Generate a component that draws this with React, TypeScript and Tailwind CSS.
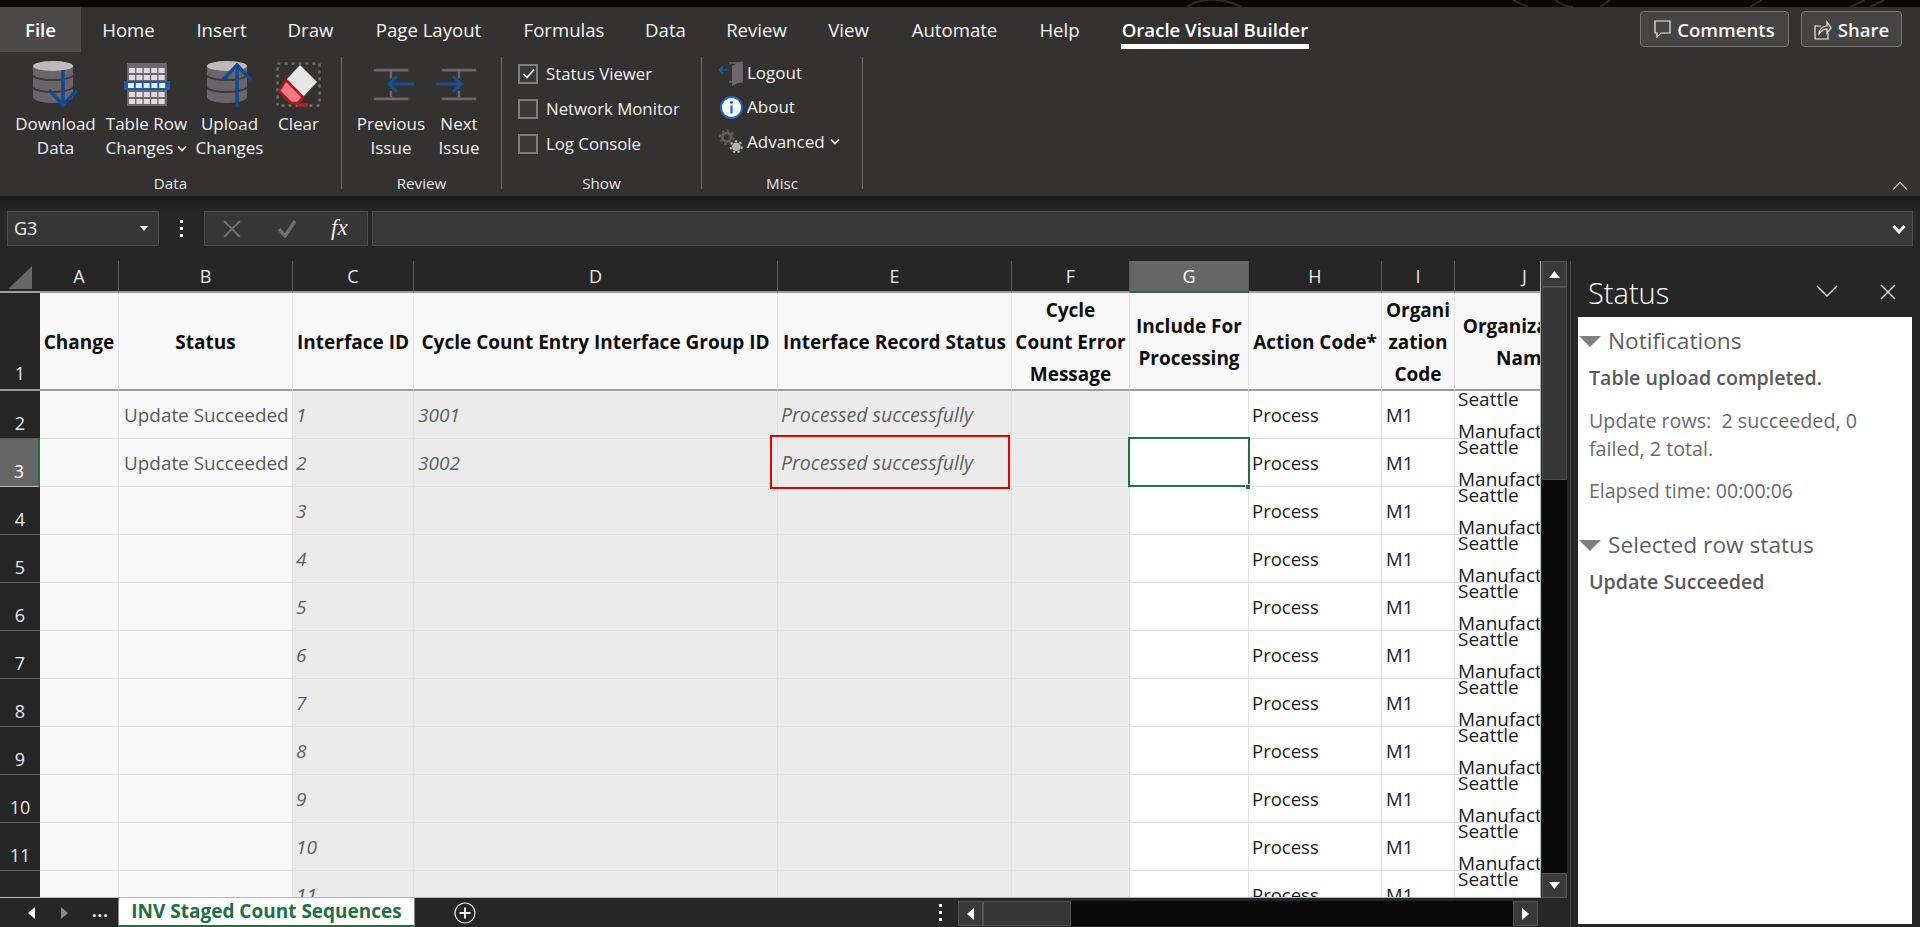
import React from "react";

const tabs: [string, string][] = [
  ["Home", "w-[95px]"],
  ["Insert", "w-[91px]"],
  ["Draw", "w-[87px]"],
  ["Page Layout", "w-[149px]"],
  ["Formulas", "w-[122px]"],
  ["Data", "w-[81px]"],
  ["Review", "w-[101px]"],
  ["View", "w-[83px]"],
  ["Automate", "w-[129px]"],
  ["Help", "w-[81px]"],
];

function Cyl() {
  return (
    <>
      <path d="M0 5v31c0 3 8 6 20 6s20-3 20-6V5z" fill="#6b6469" />
      <path d="M0 15c3 3 10 4 20 4s15-1 20-4M0 27c3 3 10 4 20 4s15-1 20-4" stroke="#3c3a3b" strokeWidth="2" fill="none" />
      <ellipse cx="20" cy="5" rx="20" ry="5" fill="#bdbabb" />
    </>
  );
}

function DownloadIcon() {
  return (
    <svg width="46" height="46" viewBox="0 0 46 46">
      <Cyl />
      <path d="M30 9v35M16 29l14 15 14-15" stroke="#0f4a94" strokeWidth="3.5" fill="none" />
    </svg>
  );
}
function UploadIcon() {
  return (
    <svg width="46" height="46" viewBox="0 0 46 46">
      <Cyl />
      <path d="M30 46V4M16 19L30 4l14 15" stroke="#0f4a94" strokeWidth="3.5" fill="none" />
    </svg>
  );
}
function TableIcon() {
  const cells: React.ReactNode[] = [];
  for (const y of [5, 12, 29, 36]) {
    for (let i = 0; i < 5; i++) {
      cells.push(<rect key={`${y}-${i}`} x={5 + i * 7.4} y={y + 2} width="6" height="5" fill="#dcdcdc" />);
    }
  }
  return (
    <svg width="46" height="46" viewBox="0 0 46 46">
      <rect x="3" y="2" width="40" height="43" fill="#6e666c" />
      {cells}
      <rect x="0" y="20" width="46" height="9" fill="#1a5aa8" />
      {[0, 1, 2, 3, 4].map((i) => (
        <rect key={i} x={4 + i * 7.8} y="22" width="6" height="5" fill="#e8eef6" />
      ))}
    </svg>
  );
}
function ClearIcon() {
  return (
    <svg width="46" height="46" viewBox="0 0 46 46">
      <rect x="1.5" y="2.5" width="42" height="42" stroke="#6f6f6f" strokeWidth="2.5" strokeDasharray="3 4" fill="none" />
      <path d="M24 4l17 17-14 15-17-17z" fill="#e6e6e6" />
      <path d="M10 19l17 17-5 6H15L3 30z" fill="#ee7a85" stroke="#b21515" strokeWidth="2.5" />
      <path d="M21 44h11" stroke="#c81e1e" strokeWidth="3" />
    </svg>
  );
}
function PrevIcon() {
  return (
    <svg width="48" height="46" viewBox="0 0 48 46">
      <path d="M6 8.5h36M6 38.5h36" stroke="#6e666c" strokeWidth="3" />
      <path d="M24 10v7M24 30v7" stroke="#6e666c" strokeWidth="2.5" />
      <path d="M48 23H23M30 15l-8 8 8 8" stroke="#1a4f96" strokeWidth="3.2" fill="none" />
    </svg>
  );
}
function NextIcon() {
  return (
    <svg width="48" height="46" viewBox="0 0 48 46">
      <path d="M6 8.5h36M6 38.5h36" stroke="#6e666c" strokeWidth="3" />
      <path d="M24 10v7M24 30v7" stroke="#6e666c" strokeWidth="2.5" />
      <path d="M0 23h25M18 15l8 8-8 8" stroke="#1a4f96" strokeWidth="3.2" fill="none" />
    </svg>
  );
}
function LogoutIcon() {
  return (
    <svg width="24" height="26" viewBox="0 0 24 26">
      <path d="M10 3h13v19H10" stroke="#6e666c" strokeWidth="1.6" fill="none" />
      <path d="M13 6l10-5v20l-10 5z" fill="#6e666c" />
      <path d="M0 10h10M4 6.5L0.5 10 4 13.5" stroke="#1a5aa8" strokeWidth="1.6" fill="none" />
    </svg>
  );
}
function InfoIcon() {
  return (
    <svg width="23" height="23" viewBox="0 0 23 23">
      <circle cx="11.5" cy="11.5" r="10.5" fill="#f4f8fc" stroke="#1a6ac4" strokeWidth="1.8" />
      <circle cx="11.5" cy="6.5" r="1.4" fill="#1a6ac4" />
      <rect x="10.4" y="9.5" width="2.2" height="8" fill="#1a6ac4" />
    </svg>
  );
}
function GearIcon() {
  return (
    <svg width="25" height="25" viewBox="0 0 25 25">
      <circle cx="8" cy="8" r="4.5" stroke="#5e5e5e" strokeWidth="3" fill="none" />
      <circle cx="8" cy="8" r="7" stroke="#5e5e5e" strokeWidth="2" strokeDasharray="2.5 3" fill="none" />
      <circle cx="18" cy="18" r="4.5" fill="#b4b4b4" />
      <circle cx="18" cy="18" r="5.8" stroke="#b4b4b4" strokeWidth="2" strokeDasharray="2.5 2.5" fill="none" />
    </svg>
  );
}
function Chev({ cls = "" }: { cls?: string }) {
  return (
    <svg width="10" height="7" viewBox="0 0 10 7" className={cls}>
      <path d="M1 1.5l4 4 4-4" stroke="currentColor" strokeWidth="1.6" fill="none" />
    </svg>
  );
}

function BigBtn({ w, icon, l1, l2, chev }: { w: string; icon: React.ReactNode; l1: string; l2?: string; chev?: boolean }) {
  return (
    <div className={`${w} flex flex-col items-center pt-[9px]`}>
      <div className="h-[46px] w-[46px] flex justify-center">{icon}</div>
      <div className="mt-[5px] text-[17px] leading-[24px] text-center text-[#f0f0f0] whitespace-nowrap">
        <div>{l1}</div>
        {l2 && (
          <div className="flex items-center justify-center gap-[4px]">
            {l2}
            {chev && <Chev />}
          </div>
        )}
      </div>
    </div>
  );
}

function Sep() {
  return <div className="w-px h-[132px] mt-[5px] bg-[#6a6a6a]" />;
}

function GroupLabel({ t }: { t: string }) {
  return <div className="h-[25px] text-center text-[15.2px] leading-[24px] text-[#e4e4e4]">{t}</div>;
}

function Check({ on, label }: { on?: boolean; label: string }) {
  return (
    <div className="h-[35px] flex items-center gap-[8px]">
      <div className="w-[20px] h-[20px] border-2 border-[#7d7d7d] bg-[#3a3a3a] flex items-center justify-center">
        {on && (
          <svg width="13" height="11" viewBox="0 0 13 11">
            <path d="M1.5 6l3.5 3.5 7-8" stroke="#f0f0f0" strokeWidth="1.7" fill="none" />
          </svg>
        )}
      </div>
      <span className="text-[16.8px] text-[#f0f0f0] whitespace-nowrap">{label}</span>
    </div>
  );
}

function Ribbon() {
  return (
    <div className="h-[144px] flex bg-[#333231] relative">
      <div className="w-[341px] flex flex-col">
        <div className="flex-1 flex pl-[10px]">
          <BigBtn w="w-[91px]" icon={<DownloadIcon />} l1="Download" l2="Data" />
          <BigBtn w="w-[91px]" icon={<TableIcon />} l1="Table Row" l2="Changes" chev />
          <BigBtn w="w-[75px]" icon={<UploadIcon />} l1="Upload" l2="Changes" />
          <BigBtn w="w-[63px]" icon={<ClearIcon />} l1="Clear" />
        </div>
        <GroupLabel t="Data" />
      </div>
      <Sep />
      <div className="w-[159px] flex flex-col">
        <div className="flex-1 flex pl-[6px]">
          <BigBtn w="w-[86px]" icon={<PrevIcon />} l1="Previous" l2="Issue" />
          <BigBtn w="w-[50px]" icon={<NextIcon />} l1="Next" l2="Issue" />
        </div>
        <GroupLabel t="Review" />
      </div>
      <Sep />
      <div className="w-[199px] flex flex-col">
        <div className="flex-1 pl-[16px] pt-[4px]">
          <Check on label="Status Viewer" />
          <Check label="Network Monitor" />
          <Check label="Log Console" />
        </div>
        <GroupLabel t="Show" />
      </div>
      <Sep />
      <div className="w-[160px] flex flex-col">
        <div className="flex-1 pl-[17px] pt-[4px] text-[17px] text-[#f0f0f0]">
          <div className="h-[34px] flex items-center gap-[4px]">
            <div className="w-[24px] flex justify-center"><LogoutIcon /></div>Logout
          </div>
          <div className="h-[34px] flex items-center gap-[4px]">
            <div className="w-[24px] flex justify-center"><InfoIcon /></div>About
          </div>
          <div className="h-[35px] flex items-center gap-[4px]">
            <div className="w-[24px] flex justify-center"><GearIcon /></div>Advanced
            <Chev cls="ml-[1px]" />
          </div>
        </div>
        <GroupLabel t="Misc" />
      </div>
      <Sep />
      <svg className="absolute right-[12px] bottom-[5px] text-[#b5b5b5]" width="16" height="10" viewBox="0 0 16 10">
        <path d="M1 8.5l7-7 7 7" stroke="currentColor" strokeWidth="1.4" fill="none" />
      </svg>
    </div>
  );
}

function TopTabs() {
  return (
    <div className="h-[45px] flex bg-[#333231] text-[18.6px] text-[#f4f4f4]">
      <div className="w-[81px] flex items-center justify-center bg-[#4b4a49] font-semibold text-white">File</div>
      {tabs.map(([t, w]) => (
        <div key={t} className={`${w} flex items-center justify-center whitespace-nowrap`}>{t}</div>
      ))}
      <div className="relative w-[230px] flex items-center justify-center font-semibold text-white whitespace-nowrap">
        Oracle Visual Builder
        <div className="absolute left-[21px] w-[188px] bottom-[3px] h-[5px] bg-white" />
      </div>
      <div className="ml-auto mr-[18px] mt-[4px] flex gap-[12px] font-semibold">
        <div className="w-[149px] h-[36px] pt-[1px] rounded-[4px] border border-[#777] bg-[#454443] flex items-center justify-center gap-[6px]">
          <svg width="17" height="19" viewBox="0 0 17 19">
            <path d="M1 1h15v12H7l-4 4v-4H1z" stroke="#eee" strokeWidth="1.2" fill="none" />
          </svg>
          Comments
        </div>
        <div className="w-[101px] h-[36px] pt-[1px] rounded-[4px] border border-[#777] bg-[#454443] flex items-center justify-center gap-[6px]">
          <svg width="18" height="20" viewBox="0 0 18 20">
            <path d="M7 6H1v13h13v-6M5 14c0-5 4-8 8-8V2l4 6-4 5V9c-4 0-6 2-8 5z" stroke="#eee" strokeWidth="1.2" fill="none" />
          </svg>
          Share
        </div>
      </div>
    </div>
  );
}

function FormulaBar() {
  return (
    <div className="h-[35px] flex text-[#f0f0f0]">
      <div className="ml-[7px] w-[152px] border border-[#4c4c4c] bg-[#363636] flex items-center justify-between pl-[6px] pr-[10px] text-[18px]">
        G3
        <svg width="8" height="5" viewBox="0 0 8 5"><path d="M0 0h8L4 5z" fill="#eee" /></svg>
      </div>
      <div className="w-[45px] flex items-center justify-center">
        <div className="flex flex-col gap-[4px]">
          <div className="w-[3px] h-[3px] bg-white" />
          <div className="w-[3px] h-[3px] bg-white" />
          <div className="w-[3px] h-[3px] bg-white" />
        </div>
      </div>
      <div className="w-[164px] border border-[#4c4c4c] bg-[#363636] flex items-center">
        <div className="w-[54px] pl-[18px]">
          <svg width="18" height="18" viewBox="0 0 18 18"><path d="M1 1l16 16M17 1L1 17" stroke="#6f6f6f" strokeWidth="2" /></svg>
        </div>
        <div className="w-[54px] pl-[18px]">
          <svg width="20" height="18" viewBox="0 0 20 18"><path d="M2 9l6 7L18 1" stroke="#6f6f6f" strokeWidth="3.5" fill="none" /></svg>
        </div>
        <div className="pl-[18px] italic font-['Liberation_Serif',serif] text-[23px] text-[#ececec]">fx</div>
      </div>
      <div className="ml-[4px] w-[1541px] border border-[#4c4c4c] bg-[#383838] flex items-center justify-end pr-[6px]">
        <svg width="14" height="10" viewBox="0 0 14 10"><path d="M1.5 2l5.5 6 5.5-6" stroke="#eee" strokeWidth="3" fill="none" /></svg>
      </div>
    </div>
  );
}

const letters = ["A", "B", "C", "D", "E", "F", "G", "H", "I", "J"];

function Head({ lines }: { lines: string[] }) {
  return (
    <div className="bg-[#f8f8f8] border-r border-[#e2e2e2] border-b-2 border-b-[#9d9d9d] pt-[1px] flex flex-col items-center justify-center text-[19px] leading-[32px] font-bold text-[#0d0d0d] whitespace-nowrap">
      {lines.map((l) => (
        <div key={l}>{l}</div>
      ))}
    </div>
  );
}

function Sheet() {
  const rows = [2, 3, 4, 5, 6, 7, 8, 9, 10, 11, 12];
  return (
    <div className="relative w-[1541px] h-[637px] overflow-hidden border-r border-b border-[#b5b5b5]">
      <div className="grid grid-cols-[40px_79px_174px_121px_364px_234px_118px_119px_133px_73px_140px] grid-rows-[32px_98px_repeat(11,48px)] w-[1595px]">
        <div className="bg-[#262626] border-b-2 border-[#9d9d9d] flex items-start justify-center pt-[5px]">
          <div className="w-0 h-0 border-l-[24px] border-l-transparent border-b-[23px] border-b-[#666]" />
        </div>
        {letters.map((c) => (
          <div
            key={c}
            className={`flex items-center justify-center text-[18px] border-r border-[#5a5a5a] ${
              c === "G" ? "bg-[#666] text-white border-b-2 border-b-[#1e6f44]" : "bg-[#262626] text-[#e8e8e8] border-b-2 border-b-[#9d9d9d]"
            }`}
          >
            {c}
          </div>
        ))}

        <div className="bg-[#262626] text-[#e8e8e8] text-[18px] flex items-end justify-center pb-[2px] border-b-2 border-[#9d9d9d]">1</div>
        <Head lines={["Change"]} />
        <Head lines={["Status"]} />
        <Head lines={["Interface ID"]} />
        <Head lines={["Cycle Count Entry Interface Group ID"]} />
        <Head lines={["Interface Record Status"]} />
        <Head lines={["Cycle", "Count Error", "Message"]} />
        <Head lines={["Include For", "Processing"]} />
        <Head lines={["Action Code*"]} />
        <Head lines={["Organi", "zation", "Code"]} />
        <Head lines={["Organization", "Name"]} />

        {rows.map((r) => (
          <React.Fragment key={r}>
            <div
              className={`flex items-end justify-center pb-[1px] text-[18px] ${
                r === 3 ? "bg-[#666] text-white border-r-2 border-r-[#1e6f44] border-b border-b-[#bbb]" : "bg-[#262626] text-[#e8e8e8] border-b border-b-[#5a5a5a]"
              }`}
            >
              {r}
            </div>
            <div className="bg-[#f8f8f8] border-r border-b border-[#e2e2e2]" />
            <div className="bg-[#f8f8f8] border-r border-b border-[#e2e2e2] flex items-center pl-[5px] pt-[1px] text-[18.9px] text-[#595959] whitespace-nowrap">
              {r <= 3 ? "Update Succeeded" : ""}
            </div>
            <div className="bg-[#ebebeb] border-r border-b border-[#e2e2e2] flex items-center pl-[3px] pt-[1px] text-[19px] italic text-[#5f5f5f]">{r - 1}</div>
            <div className="bg-[#ebebeb] border-r border-b border-[#e2e2e2] flex items-center pl-[4px] pt-[1px] text-[19px] italic text-[#5f5f5f]">
              {r === 2 ? "3001" : r === 3 ? "3002" : ""}
            </div>
            <div className="bg-[#ebebeb] border-r border-b border-[#e2e2e2] flex items-center pl-[3px] text-[19.6px] italic text-[#5f5f5f] whitespace-nowrap">
              {r <= 3 ? "Processed successfully" : ""}
            </div>
            <div className="bg-[#ebebeb] border-r border-b border-[#e2e2e2]" />
            <div className="bg-white border-r border-b border-[#e2e2e2]" />
            <div className="bg-white border-r border-b border-[#e2e2e2] flex items-center pl-[3px] text-[18.5px] text-[#1a1a1a]">Process</div>
            <div className="bg-white border-r border-b border-[#e2e2e2] flex items-center pl-[4px] text-[18.5px] text-[#1a1a1a]">M1</div>
            <div className="bg-white border-b border-[#e2e2e2] overflow-hidden flex flex-col justify-center pl-[3px] text-[19px] leading-[32px] text-[#1a1a1a]">
              <div className="shrink-0 h-[32px]">Seattle</div>
              <div className="shrink-0 h-[32px]">Manufacturing</div>
            </div>
          </React.Fragment>
        ))}
      </div>
      <div className="absolute left-[770px] top-[174px] w-[240px] h-[54px] border-2 border-[#e60000]" />
      <div className="absolute left-[1128px] top-[176px] w-[122px] h-[50px] border-2 border-[#1e6f44]" />
      <div className="absolute left-[1245px] top-[223px] w-[6px] h-[6px] bg-[#1e6f44] border border-white" />
    </div>
  );
}

function VScroll() {
  return (
    <div className="w-[29px] h-[637px] flex pl-[1px]">
      <div className="w-[25px] h-full bg-[#0a0a0a] flex flex-col">
        <div className="h-[26px] bg-[#3a3a3a] border border-[#555] flex items-center justify-center">
          <svg width="11" height="7" viewBox="0 0 11 7"><path d="M5.5 0L11 7H0z" fill="#fff" /></svg>
        </div>
        <div className="h-[193px] bg-[#373737] border border-[#4a4a4a]" />
        <div className="mt-auto h-[25px] bg-[#3a3a3a] border border-[#555] flex items-center justify-center">
          <svg width="11" height="7" viewBox="0 0 11 7"><path d="M5.5 7L11 0H0z" fill="#fff" /></svg>
        </div>
      </div>
    </div>
  );
}

function BottomBar() {
  return (
    <div className="h-[29px] flex text-white">
      <div className="w-[118px] flex items-center">
        <svg className="ml-[28px]" width="7" height="12" viewBox="0 0 7 12"><path d="M7 0v12L0 6z" fill="#fff" /></svg>
        <svg className="ml-[26px]" width="7" height="12" viewBox="0 0 7 12"><path d="M0 0v12l7-6z" fill="#8a8a8a" /></svg>
        <div className="ml-[24px] font-bold text-[16px] tracking-[1px] mt-[-4px]">...</div>
      </div>
      <div className="w-[297px] h-[29px] bg-white border-x border-x-[#8a8a8a] border-b-2 border-b-[#1e6f44] flex items-center justify-center text-[19px] font-bold text-[#1e6f44] whitespace-nowrap">
        INV Staged Count Sequences
      </div>
      <div className="w-[516px] flex items-center pl-[39px]">
        <svg width="22" height="22" viewBox="0 0 22 22">
          <circle cx="11" cy="11" r="10" stroke="#e8e8e8" strokeWidth="1.2" fill="none" />
          <path d="M11 5.5v11M5.5 11h11" stroke="#fff" strokeWidth="1.8" />
        </svg>
      </div>
      <div className="w-[18px] flex flex-col items-center justify-center gap-[4px]">
        <div className="w-[3px] h-[3px] bg-white" />
        <div className="w-[3px] h-[3px] bg-white" />
        <div className="w-[3px] h-[3px] bg-white" />
      </div>
      <div className="ml-[9px] w-[580px] h-[25px] mt-[3px] bg-[#0a0a0a] flex">
        <div className="w-[25px] bg-[#3a3a3a] border border-[#555] flex items-center justify-center">
          <svg width="7" height="12" viewBox="0 0 7 12"><path d="M7 0v12L0 6z" fill="#fff" /></svg>
        </div>
        <div className="w-[88px] bg-[#373737] border border-[#555]" />
        <div className="ml-auto w-[25px] bg-[#3a3a3a] border border-[#555] flex items-center justify-center">
          <svg width="7" height="12" viewBox="0 0 7 12"><path d="M0 0v12l7-6z" fill="#fff" /></svg>
        </div>
      </div>
    </div>
  );
}

function Tri() {
  return <div className="w-0 h-0 border-x-[11px] border-x-transparent border-t-[11px] border-t-[#7f7f7f]" />;
}

function StatusPanel() {
  return (
    <div className="w-[350px] flex flex-col border-l border-[#4a4a4a]">
      <div className="h-[56px] flex items-center pl-[17px] pt-[5px] text-white">
        <span className="text-[29px] font-light mt-[3px]">Status</span>
        <svg className="ml-auto" width="22" height="13" viewBox="0 0 22 13"><path d="M1 1l10 10L21 1" stroke="#eee" strokeWidth="1.4" fill="none" /></svg>
        <svg className="ml-[42px] mr-[24px]" width="16" height="16" viewBox="0 0 16 16"><path d="M1 1l14 14M15 1L1 15" stroke="#eee" strokeWidth="1.4" /></svg>
      </div>
      <div className="ml-[7px] w-[334px] h-[607px] bg-white text-[#5e5e5e]">
        <div className="h-[48px] flex items-center pl-[1px] gap-[7px] text-[22.7px]">
          <Tri />
          Notifications
        </div>
        <div className="pl-[11px] text-[19.6px] font-semibold leading-[26px] text-[#595959] whitespace-nowrap">Table upload completed.</div>
        <div className="pl-[11px] mt-[16px] text-[19.7px] leading-[28px] text-[#6a6a6a] whitespace-pre">{"Update rows:  2 succeeded, 0\nfailed, 2 total."}</div>
        <div className="pl-[11px] mt-[14px] text-[19.5px] leading-[28px] text-[#6a6a6a]">Elapsed time: 00:00:06</div>
        <div className="h-[48px] mt-[16px] flex items-center pl-[1px] gap-[7px] text-[22.7px]">
          <Tri />
          Selected row status
        </div>
        <div className="pl-[11px] text-[19.6px] font-semibold leading-[26px] text-[#595959]">Update Succeeded</div>
      </div>
    </div>
  );
}

export default function App() {
  return (
    <div className="w-[1920px] h-[927px] overflow-hidden flex flex-col bg-[#262626] font-['Open_Sans',sans-serif]">
      <div className="h-[7px] bg-[#080808]">
        <svg width="1920" height="7" viewBox="0 0 1920 7">
          <path d="M1187 7c8-6 20-8 30-7s18 3 24 7M1513 0l15 7M1555 0c4 3 10 7 18 7M1600 7l10-7M1750 7l12-7M1850 7l15-7M1870 7l14-7" stroke="#2b2b2b" strokeWidth="2" fill="none" />
        </svg>
      </div>
      <TopTabs />
      <Ribbon />
      <div className="h-[15px] bg-gradient-to-b from-[#1c1c1c] to-[#262626]" />
      <FormulaBar />
      <div className="h-[15px]" />
      <div className="flex flex-1">
        <div className="w-[1570px] flex flex-col">
          <div className="flex">
            <Sheet />
            <VScroll />
          </div>
          <BottomBar />
        </div>
        <StatusPanel />
      </div>
    </div>
  );
}
